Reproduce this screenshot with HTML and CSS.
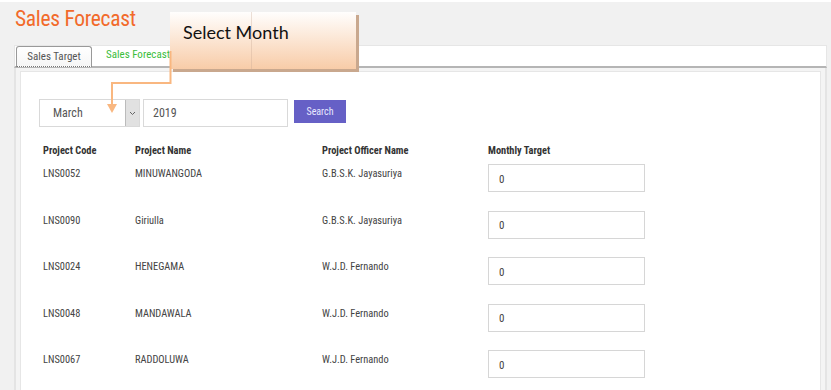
FILE: index.html
```html
<!DOCTYPE html>
<html lang="en">
<head>
  <meta charset="UTF-8">
  <title>Sales Forecast</title>
  <link rel="stylesheet" href="styles.css">
</head>
<body>
  <div class="page">
    <h1 class="page-title">Sales Forecast</h1>

    <div class="tab-bar">
      <div class="tab active">Sales Target</div>
      <div class="tab">Sales Forecast</div>
    </div>

    <div class="tab-content">
      <div class="panel">
        <form class="filter">
          <div class="select-box">
            <span class="select-value">March</span>
            <span class="select-arrow">
              <svg width="7" height="5" viewBox="0 0 7 5"><path d="M1 1l2.5 2.5L6 1" fill="none" stroke="#666" stroke-width="1"/></svg>
            </span>
          </div>
          <input class="year-input" type="text" value="2019">
          <button type="button" class="search-btn">Search</button>
        </form>

        <div class="target-table">
          <div class="row head">
            <div>Project Code</div>
            <div>Project Name</div>
            <div>Project Officer Name</div>
            <div>Monthly Target</div>
          </div>
          <div class="row">
            <div>LNS0052</div>
            <div>MINUWANGODA</div>
            <div>G.B.S.K. Jayasuriya</div>
            <div><input class="target-input" type="text" value="0"></div>
          </div>
          <div class="row">
            <div>LNS0090</div>
            <div>Giriulla</div>
            <div>G.B.S.K. Jayasuriya</div>
            <div><input class="target-input" type="text" value="0"></div>
          </div>
          <div class="row">
            <div>LNS0024</div>
            <div>HENEGAMA</div>
            <div>W.J.D. Fernando</div>
            <div><input class="target-input" type="text" value="0"></div>
          </div>
          <div class="row">
            <div>LNS0048</div>
            <div>MANDAWALA</div>
            <div>W.J.D. Fernando</div>
            <div><input class="target-input" type="text" value="0"></div>
          </div>
          <div class="row">
            <div>LNS0067</div>
            <div>RADDOLUWA</div>
            <div>W.J.D. Fernando</div>
            <div><input class="target-input" type="text" value="0"></div>
          </div>
        </div>
      </div>
    </div>

    <!-- annotation callout -->
    <div class="callout">
      <span>Select Month</span>
    </div>
    <svg class="callout-line" width="70" height="70" viewBox="0 0 70 70">
      <path d="M60.5 0V32H2V54" fill="none" stroke="#f9b780" stroke-width="2"/>
      <path d="M-3 53h10l-5 9z" fill="#f9b780"/>
    </svg>
  </div>
</body>
</html>
```

FILE: styles.css
```css
* {
  box-sizing: border-box;
  margin: 0;
  padding: 0;
}

body {
  background: #f1f1f1;
  font-family: "Roboto Condensed", "Liberation Sans Narrow", Roboto, sans-serif;
  color: #444;
  border-top: 2px solid #fff;
}

.page {
  position: relative;
  padding: 0 4px 0 14px;
  height: 388px;
  overflow: hidden;
}

.page-title {
  font-size: 21.5px;
  font-weight: 400;
  color: #f26a2b;
  line-height: 28px;
  height: 43px;
  padding-top: 3px;
  padding-left: 1px;
  letter-spacing: -0.3px;
}

.tab-bar {
  display: flex;
  align-items: flex-end;
  height: 23px;
  background: #fff;
  border: 1px solid #e6e6e6;
  border-bottom: 2px solid #b5b5b5;
  padding-left: 1px;
}

.tab {
  font-size: 11px;
  line-height: 20px;
  height: 21px;
  padding: 0 12px;
  color: #3bbd3b;
}

.tab.active {
  color: #555;
  border: 1px solid #999;
  border-bottom: 1px dotted #777;
  border-radius: 3px 3px 0 0;
  margin-bottom: -1px;
  width: 76px;
  padding: 0;
  text-align: center;
  margin-right: 2px;
  background: linear-gradient(#fff, #f6f6f6);
}

.tab-content {
  background: #f4f4f4;
  border-left: 2px solid #e4e4e4;
  border-right: 2px solid #e4e4e4;
  padding: 3px 4px 0 4px;
  height: 330px;
}

.panel {
  background: #fff;
  border: 1px solid #e6e6e6;
  height: 100%;
  padding: 27px 0 0 18px;
}

.filter {
  display: flex;
  align-items: flex-start;
  height: 44px;
}

.select-box {
  display: flex;
  width: 101px;
  height: 28px;
  border: 1px solid #d9d9d9;
  background: #fff;
}

.select-value {
  flex: 1;
  font-size: 12px;
  line-height: 26px;
  padding-left: 13px;
  color: #555;
}

.select-arrow {
  width: 14px;
  background: #e1e1e1;
  border-left: 1px solid #bbb;
  display: flex;
  align-items: center;
  justify-content: center;
}

.year-input {
  width: 145px;
  height: 28px;
  margin-left: 3px;
  border: 1px solid #d9d9d9;
  font-family: inherit;
  font-size: 12px;
  color: #555;
  padding-left: 9px;
  outline: none;
}

.search-btn {
  margin-left: 6px;
  margin-top: 1px;
  width: 52px;
  height: 23px;
  border: none;
  background: #6660c6;
  color: #e8e8ff;
  font-family: inherit;
  font-size: 10px;
}

.target-table {
  padding-left: 4px;
}

.row {
  display: grid;
  grid-template-columns: 92px 187px 166px 157px;
  font-size: 10.4px;
  color: #444;
  height: 46.5px;
}

.row > div {
  padding-top: 3px;
}

.row > div:last-child {
  padding-top: 0;
}

.row.head {
  font-weight: 700;
  color: #333;
  height: 21px;
  line-height: 16px;
}

.row.head > div {
  padding-top: 0;
}

.target-input {
  width: 157px;
  height: 28px;
  border: 1px solid #d6d6d6;
  font-family: inherit;
  font-size: 11px;
  color: #444;
  padding-left: 10px;
  padding-top: 2px;
  outline: none;
}

.callout {
  position: absolute;
  left: 170px;
  top: 10px;
  width: 186px;
  height: 57px;
  background: linear-gradient(#fffefd, #f8cca8);
  box-shadow: 3px 3px 0 #c9a88e;
  padding: 9px 0 0 13px;
  font-family: Lato, "Open Sans", sans-serif;
  font-size: 18px;
  color: #111;
}

.callout::after {
  content: "";
  position: absolute;
  left: 81px;
  top: 0;
  bottom: 0;
  border-left: 1px solid rgba(200, 170, 150, 0.35);
}

.callout-line {
  position: absolute;
  left: 110px;
  top: 49px;
  overflow: visible;
}
```
